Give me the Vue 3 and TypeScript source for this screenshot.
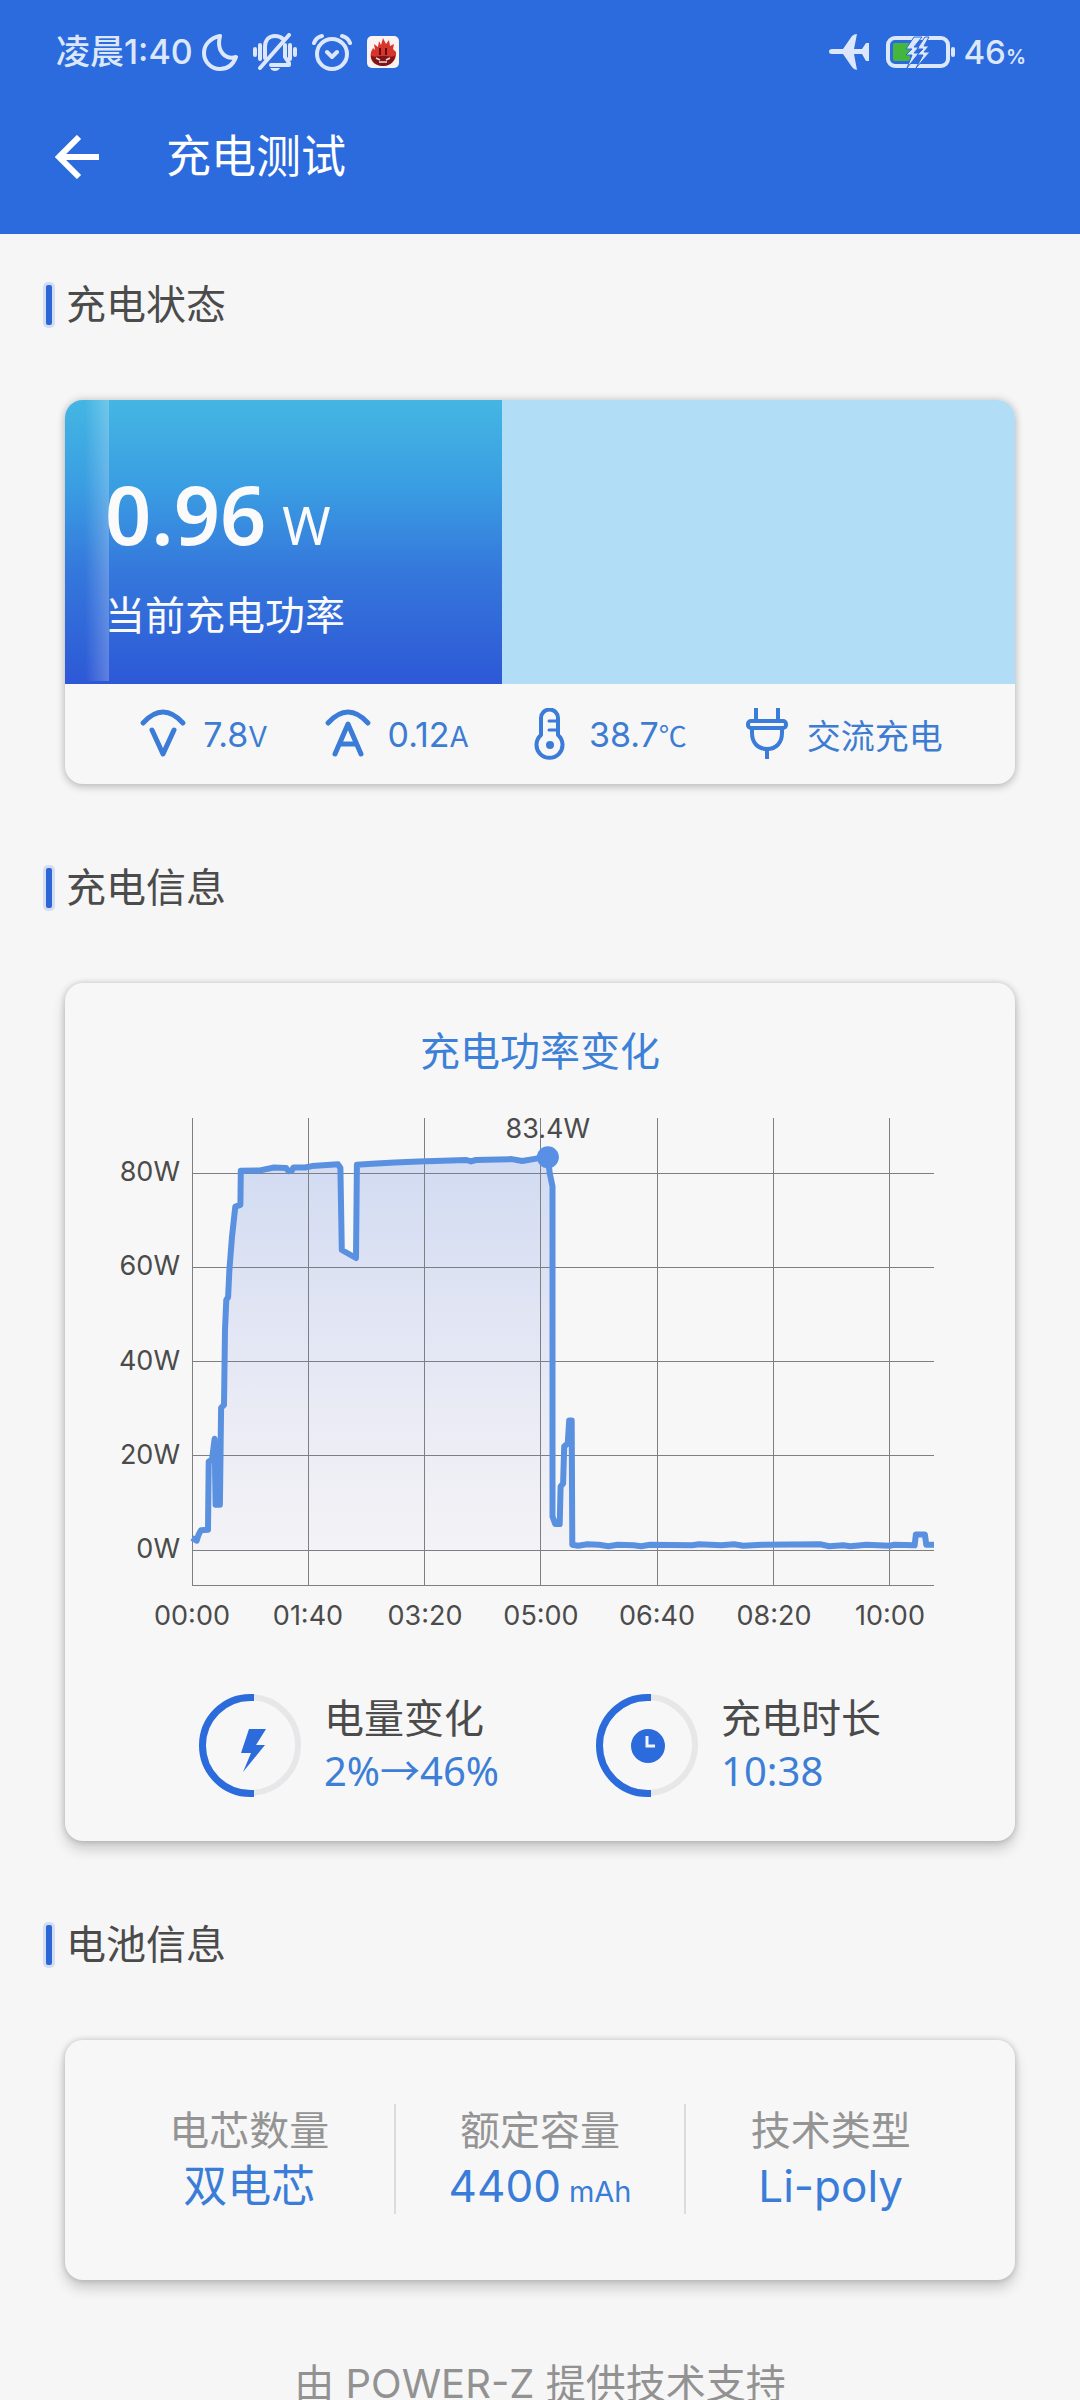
<script setup lang="ts">
type Sample = [seconds: number, watts: number]

// Charging curve: seconds since start, power in watts
const samples: Sample[] = [
  [0, 2.6], [4, 2], [5.6, 3.2], [7.7, 4.2], [13.8, 4.3], [14.4, 18.8], [17.2, 19.2], [19.4, 23.6],
  [20.3, 9.6], [24, 9.6], [25, 30.2], [27.5, 30.8], [28.4, 46.7], [29.5, 53.1], [31, 53.7],
  [32.2, 59.5], [34.4, 66.5], [37.2, 72.9], [41.6, 73.3], [42, 80.5], [58.5, 80.6], [70.5, 81.2],
  [80.9, 81.1], [83, 80.4], [86, 80.6], [87.2, 81.2], [97.2, 81.2], [103.2, 81.5], [125.5, 81.9],
  [127.6, 81.1], [128.8, 63.7], [141, 62], [141.8, 81.8], [155, 82], [174.4, 82.3], [195, 82.5],
  [236, 82.8], [240, 82.5], [244, 82.8], [275, 83], [284, 82.6], [296, 83.1], [306, 83.4],
  [307.6, 80], [310, 77.2], [310, 7.1], [312.3, 5.5], [316.2, 5.5], [316.9, 13.5], [319.1, 14.1],
  [320, 22], [323, 22.6], [324.3, 27.5], [326.5, 27.5], [327, 1.1], [332, 0.9], [340, 1.2],
  [350, 1.1], [358, 0.8], [366, 1.1], [380, 1], [386, 0.8], [394, 1.1], [430, 1], [436, 1.2],
  [455, 1], [466, 1.2], [474, 0.9], [490, 1.1], [540, 1.2], [548, 0.8], [560, 1], [566, 0.8],
  [580, 1.1], [600, 0.9], [604, 1.1], [621.3, 1], [622.4, 3.3], [630.2, 3.3], [631.4, 1.1], [638, 1.1],
]

const plot = { left: 127, right: 869, top: 42, zero: 474, bottom: 509 }
const totalSeconds = 638
const peak: Sample = [306, 83.4]

const px = (s: number): number => plot.left + (s / totalSeconds) * (plot.right - plot.left)
const py = (w: number): number => plot.zero - w * 4.71
const fmt = (n: number): string => n.toFixed(1)

const line = samples.map(([s, w]) => `${fmt(px(s))},${fmt(py(w))}`).join(' ')
const area = `${plot.left},${plot.zero} ${line} ${plot.right},${plot.zero}`

const powerTicks = [80, 60, 40, 20, 0]
const timeTicks = [0, 100, 200, 300, 400, 500, 600].map((s) => ({
  s,
  label: `${String(Math.floor(s / 60)).padStart(2, '0')}:${String(s % 60).padStart(2, '0')}`,
}))

const batteryLevel = 46

const batteryFacts: { label: string; value: string; unit?: string }[] = [
  { label: '电芯数量', value: '双电芯' },
  { label: '额定容量', value: '4400', unit: 'mAh' },
  { label: '技术类型', value: 'Li-poly' },
]
</script>

<template>
  <div class="app">
    <header class="header">
      <div class="status">
        <div class="status-group">
          <span class="clock">凌晨1:40</span>
          <svg class="moon" width="36" height="38" viewBox="0 0 36 38" aria-hidden="true">
            <path d="M18 3C8 5 2 12 2 20A16 16 0 0 0 18 36C25 36 31 32 34 24C24 27 14 19 18 3Z" />
          </svg>
          <svg width="44" height="38" viewBox="0 0 44 38" class="stroke" aria-hidden="true">
            <path d="M2 16v6M7 12v14M42 16v6M37 12v14" />
            <path d="M12 25V14C12 7 16 3 22 3c3 0 6 1 8 3M32 12v12l4 6v2H18" />
            <path d="M36 2L7 35" />
            <path d="M17 35h10c-1 2-3 3-5 3s-4-1-5-3Z" class="solid" />
          </svg>
          <svg width="40" height="38" viewBox="0 0 40 38" class="stroke" aria-hidden="true">
            <circle cx="20" cy="21" r="15" />
            <path d="M15 19l5 5 5-5M2 10c1-3 4-6 8-7M38 10c-1-3-4-6-8-7" />
          </svg>
          <svg width="32" height="32" viewBox="0 0 32 32" aria-hidden="true">
            <rect width="32" height="32" rx="5" fill="#fbf3f1" />
            <path
              d="M16 2l3 6 3-4 1 6 4-2-1 5 3 3c1 8-5 14-13 14S2 25 4 16l2-4 2 2-1-6 4 3 1-6 2 4Z"
              fill="#d8342c"
            />
            <path d="M4 19c2 3 6 1 12 1s10 2 12-1c0 7-6 11-12 11S4 26 4 19Z" fill="#7c1518" />
            <path d="M13 12v7M19 12v7" stroke="#5a1012" stroke-width="2" />
            <path d="M9 22l4 2M23 22l-4 2M12 26h8" stroke="#f6d9d4" stroke-width="1.5" fill="none" />
          </svg>
        </div>
        <div class="status-group">
          <svg width="42" height="38" viewBox="0 0 42 38" aria-hidden="true">
            <path
              d="M3 16H14L23 3Q25 1 28 1L25 16H33L37 10H40V28H37L33 21H25L28 37Q25 37 23 34L14 21H3Q0 21 0 18.500T3 16Z"
              fill="#dce7fb"
            />
          </svg>
          <svg width="70" height="32" viewBox="0 0 70 32" aria-hidden="true">
            <rect x="2" y="2" width="60" height="28" rx="7" fill="none" stroke="#dce7fb" stroke-width="4" />
            <rect x="7" y="7" width="17" height="18" rx="2" fill="#45b63c" />
            <rect x="65" y="11" width="4" height="10" rx="2" fill="#dce7fb" />
            <path
              d="M28 1L20 13h6L20 19h6L21 32L33 17h-5L33 11h-5L36 1ZM39 1L31 13h6L31 19h6L30 32L44 16h-6L43 10h-5L43 1Z"
              fill="#dce7fb"
              stroke="#2c6bdd"
              stroke-width="1"
            />
          </svg>
          <span class="percent">46<small>%</small></span>
        </div>
      </div>
      <div class="bar">
        <button class="back" type="button" aria-label="返回">
          <svg width="44" height="44" viewBox="0 0 44 44" aria-hidden="true">
            <path d="M24 2L4 22L24 42M4 22H44" fill="none" stroke="#fff" stroke-width="6" />
          </svg>
        </button>
        <h1>充电测试</h1>
      </div>
    </header>

    <main class="content">
      <section>
        <h2>充电状态</h2>
        <div class="card state-card">
          <div class="gauge">
            <div class="gauge-fill" :style="{ width: batteryLevel + '%' }"></div>
            <div class="shine"></div>
            <div class="gauge-text">
              <p class="power">0.96<small>W</small></p>
              <p class="power-label">当前充电功率</p>
            </div>
          </div>
          <ul class="readings">
            <li>
              <svg width="52" height="52" viewBox="0 0 52 52" class="blue" aria-hidden="true">
                <path d="M6 15Q26 -7 46 15M15 22L26 46L37 22" stroke-width="5" />
              </svg>
              <span>7.8<small>V</small></span>
            </li>
            <li>
              <svg width="52" height="52" viewBox="0 0 52 52" class="blue" aria-hidden="true">
                <path d="M6 15Q26 -7 46 15M13 46L26 16L39 46M18 36H34" stroke-width="5" />
              </svg>
              <span>0.12<small>A</small></span>
            </li>
            <li>
              <svg width="52" height="52" viewBox="0 0 52 52" class="blue" aria-hidden="true">
                <path d="M18 27V10a8 8 0 0 1 17 0V27a13 13 0 1 1 -17 0Z" stroke-width="4" />
                <path d="M26 13h8M26 22h8" stroke-width="3" />
                <circle cx="27" cy="37" r="4" class="dot" />
              </svg>
              <span>38.7<small class="cjk">℃</small></span>
            </li>
            <li>
              <svg width="52" height="52" viewBox="0 0 52 52" class="blue butt" aria-hidden="true">
                <path d="M15 0V13M37 0V13M26 41V51" stroke-width="4" />
                <rect x="7" y="13" width="38" height="7" rx="3" stroke-width="4" />
                <path d="M11 21V25C11 35 17 41 26 41S41 35 41 25V21" stroke-width="4" />
              </svg>
              <span>交流充电</span>
            </li>
          </ul>
        </div>
      </section>

      <section>
        <h2>充电信息</h2>
        <div class="card info-card">
          <h3>充电功率变化</h3>
          <svg class="chart" viewBox="0 0 950 564" role="img" aria-label="充电功率变化">
            <defs>
              <linearGradient id="area" x1="0" y1="0" x2="0" y2="1">
                <stop offset="0" stop-color="#4a78e0" stop-opacity="0.22" />
                <stop offset="1" stop-color="#7a7ae0" stop-opacity="0.03" />
              </linearGradient>
            </defs>
            <polygon :points="area" fill="url(#area)" />
            <g class="grid">
              <line
                v-for="t in timeTicks"
                :key="t.s"
                :x1="Math.floor(px(t.s))"
                :x2="Math.floor(px(t.s))"
                :y1="plot.top"
                :y2="plot.bottom"
              />
              <line
                v-for="w in powerTicks"
                :key="w"
                :x1="plot.left"
                :x2="plot.right"
                :y1="Math.floor(py(w))"
                :y2="Math.floor(py(w))"
              />
              <line :x1="plot.left" :x2="plot.right" :y1="plot.bottom" :y2="plot.bottom" />
            </g>
            <polyline :points="line" class="curve" />
            <circle :cx="px(peak[0])" :cy="py(peak[1])" r="11" fill="#5990e6" />
            <g class="labels">
              <text :x="px(peak[0])" :y="62" text-anchor="middle">83.4W</text>
              <text v-for="w in powerTicks" :key="w" x="115" :y="Math.round(py(w)) + 8" text-anchor="end">
                {{ w }}W
              </text>
              <text v-for="t in timeTicks" :key="t.s" :x="Math.round(px(t.s))" y="549" text-anchor="middle">
                {{ t.label }}
              </text>
            </g>
          </svg>
          <div class="stats">
            <div class="stat">
              <svg width="103" height="103" viewBox="0 0 103 103" aria-hidden="true">
                <circle cx="51" cy="51" r="48" class="ring" />
                <path d="M55 3.5H51.5A48 48 0 0 0 51.5 99.5H55" class="ring-arc" />
                <path d="M50 35H67L57 51H66L44 78L52 59H42Z" fill="#2b6bdb" />
              </svg>
              <dl>
                <dt>电量变化</dt>
                <dd>2%<span class="cjk">→</span>46%</dd>
              </dl>
            </div>
            <div class="stat">
              <svg width="103" height="103" viewBox="0 0 103 103" aria-hidden="true">
                <circle cx="51" cy="51" r="48" class="ring" />
                <path d="M55 3.5H51.5A48 48 0 0 0 51.5 99.5H55" class="ring-arc" />
                <circle cx="52" cy="52" r="17" fill="#2b6bdb" />
                <path d="M51 42V52H59" fill="none" stroke="#f0f4fc" stroke-width="3" />
              </svg>
              <dl>
                <dt>充电时长</dt>
                <dd>10:38</dd>
              </dl>
            </div>
          </div>
        </div>
      </section>

      <section>
        <h2>电池信息</h2>
        <dl class="card facts">
          <div v-for="f in batteryFacts" :key="f.label" class="fact">
            <dt>{{ f.label }}</dt>
            <dd>{{ f.value }}<small v-if="f.unit">{{ f.unit }}</small></dd>
          </div>
        </dl>
      </section>

      <footer class="footer">由 POWER-Z 提供技术支持</footer>
    </main>
  </div>
</template>

<style>
body {
  background: #f6f6f6;
}
</style>

<style scoped>
.app {
  display: flex;
  flex-direction: column;
  height: 100vh;
  background: #f6f6f6;
  color: #4b4b4b;
  font-family: Inter, "Noto Sans CJK SC", sans-serif;
  font-size: 40px;
}

h1,
h2,
h3,
p,
ul,
dl,
dd {
  margin: 0;
  padding: 0;
  font-weight: 400;
}

small,
.cjk {
  line-height: 1;
}

.cjk {
  font-family: "Noto Sans CJK SC", sans-serif;
}

svg {
  display: block;
  flex: none;
}

.header {
  flex: none;
  padding-bottom: 24px;
  background: #2c6bdd;
}

.status {
  display: flex;
  justify-content: space-between;
  align-items: center;
  height: 104px;
  padding: 0 54px 0 56px;
  color: #dce7fb;
  font-size: 34px;
  font-weight: 500;
}

.status-group {
  display: flex;
  align-items: center;
  gap: 15px;
}

.clock {
  margin-right: -6px;
  line-height: 48px;
}

.moon {
  fill: none;
  stroke: #dce7fb;
  stroke-width: 4;
  stroke-linejoin: round;
}

.stroke {
  fill: none;
  stroke: #dce7fb;
  stroke-width: 4;
  stroke-linecap: round;
  stroke-linejoin: round;
}

.stroke .solid {
  fill: #dce7fb;
  stroke: none;
}

.percent {
  margin-left: -8px;
  font-size: 33px;
}

.percent small {
  font-size: 20px;
  font-weight: 600;
}

.bar {
  display: flex;
  align-items: center;
  gap: 67px;
  height: 106px;
  padding: 0 55px;
}

.back {
  padding: 0;
  border: 0;
  background: none;
}

h1 {
  color: #fff;
  font-size: 45px;
  line-height: 64px;
}

.content {
  flex: 1;
  min-height: 0;
  padding: 47px 65px 0;
  overflow-y: auto;
  scrollbar-width: none;
}

section {
  margin-bottom: 80px;
}

h2 {
  display: flex;
  align-items: center;
  gap: 14px;
  margin: 0 0 71px -19px;
  font-size: 40px;
  line-height: 48px;
}

h2::before {
  width: 6px;
  height: 40px;
  border-radius: 2px;
  background: #2b66d4;
  box-shadow: 0 0 0 3px #d3def5;
  content: "";
}

.card {
  border-radius: 18px;
  background: #f7f7f7;
  box-shadow: 0 0 6px rgba(0, 0, 0, 0.2), 0 8px 14px rgba(0, 0, 0, 0.18);
}

.state-card {
  overflow: hidden;
  box-shadow: 0 0 8px rgba(0, 0, 0, 0.2), 0 4px 8px rgba(0, 0, 0, 0.12);
}

.gauge {
  position: relative;
  height: 284px;
  background: #b2ddf7;
}

.gauge-fill {
  position: absolute;
  inset: 0 auto 0 0;
  background: linear-gradient(#44b6e3, #3a9ee2 30%, #3578dc 60%, #2d58d6);
}

.shine {
  position: absolute;
  top: 0;
  bottom: 3px;
  left: 20px;
  width: 24px;
  background: linear-gradient(to right, rgba(255, 255, 255, 0), rgba(255, 255, 255, 0.24));
}

.gauge-text {
  position: relative;
  padding: 64px 40px 0;
  color: #fafafa;
}

.power {
  font-family: "Noto Sans", sans-serif;
  font-size: 81px;
  font-weight: 600;
  line-height: 100px;
}

.power small {
  margin-left: 16px;
  font-size: 52px;
  font-weight: 400;
}

.power-label {
  margin-top: 28px;
  line-height: 48px;
}

.readings {
  display: flex;
  justify-content: center;
  align-items: center;
  gap: 54px;
  height: 100px;
  color: #3d7cd3;
  font-size: 34px;
  list-style: none;
}

.readings li {
  display: flex;
  align-items: center;
  gap: 14px;
}

.readings small {
  font-size: 28px;
}

.blue {
  fill: none;
  stroke: #3b7cd8;
  stroke-linecap: round;
  stroke-linejoin: round;
}

.blue.butt {
  stroke-linecap: butt;
}

.blue .dot {
  fill: #3b7cd8;
  stroke: none;
}

.info-card {
  padding: 45px 0 44px;
}

h3 {
  color: #3d80d8;
  font-size: 40px;
  line-height: 48px;
  text-align: center;
}

.chart {
  width: 100%;
}

.grid line {
  stroke: #7d7f84;
  stroke-width: 1;
  shape-rendering: crispEdges;
}

.curve {
  fill: none;
  stroke: #5a90e0;
  stroke-width: 6;
  stroke-linejoin: round;
}

.labels {
  fill: #4b4b4b;
  font-size: 27px;
}

.stats {
  display: flex;
  justify-content: center;
  gap: 97px;
  margin-top: 53px;
}

.stat {
  display: flex;
  align-items: center;
  gap: 22px;
}

.stat dt {
  line-height: 52px;
}

.stat dd {
  color: #3d7fd6;
  font-family: "Noto Sans", sans-serif;
  line-height: 52px;
}

.ring {
  fill: none;
  stroke: #e7e7e9;
  stroke-width: 6;
}

.ring-arc {
  fill: none;
  stroke: #2b6bdb;
  stroke-width: 7;
}

.facts {
  display: flex;
  padding: 64px 40px 66px;
}

.fact {
  flex: 1;
  text-align: center;
}

.fact + .fact {
  border-left: 2px solid #dcdcdc;
}

.fact dt {
  color: #949494;
  line-height: 54px;
}

.fact dd {
  color: #3a7dd8;
  font-size: 44px;
  line-height: 56px;
}

.fact small {
  margin-left: 8px;
  font-size: 29px;
}

.footer {
  color: #929292;
  line-height: 48px;
  text-align: center;
}
</style>
